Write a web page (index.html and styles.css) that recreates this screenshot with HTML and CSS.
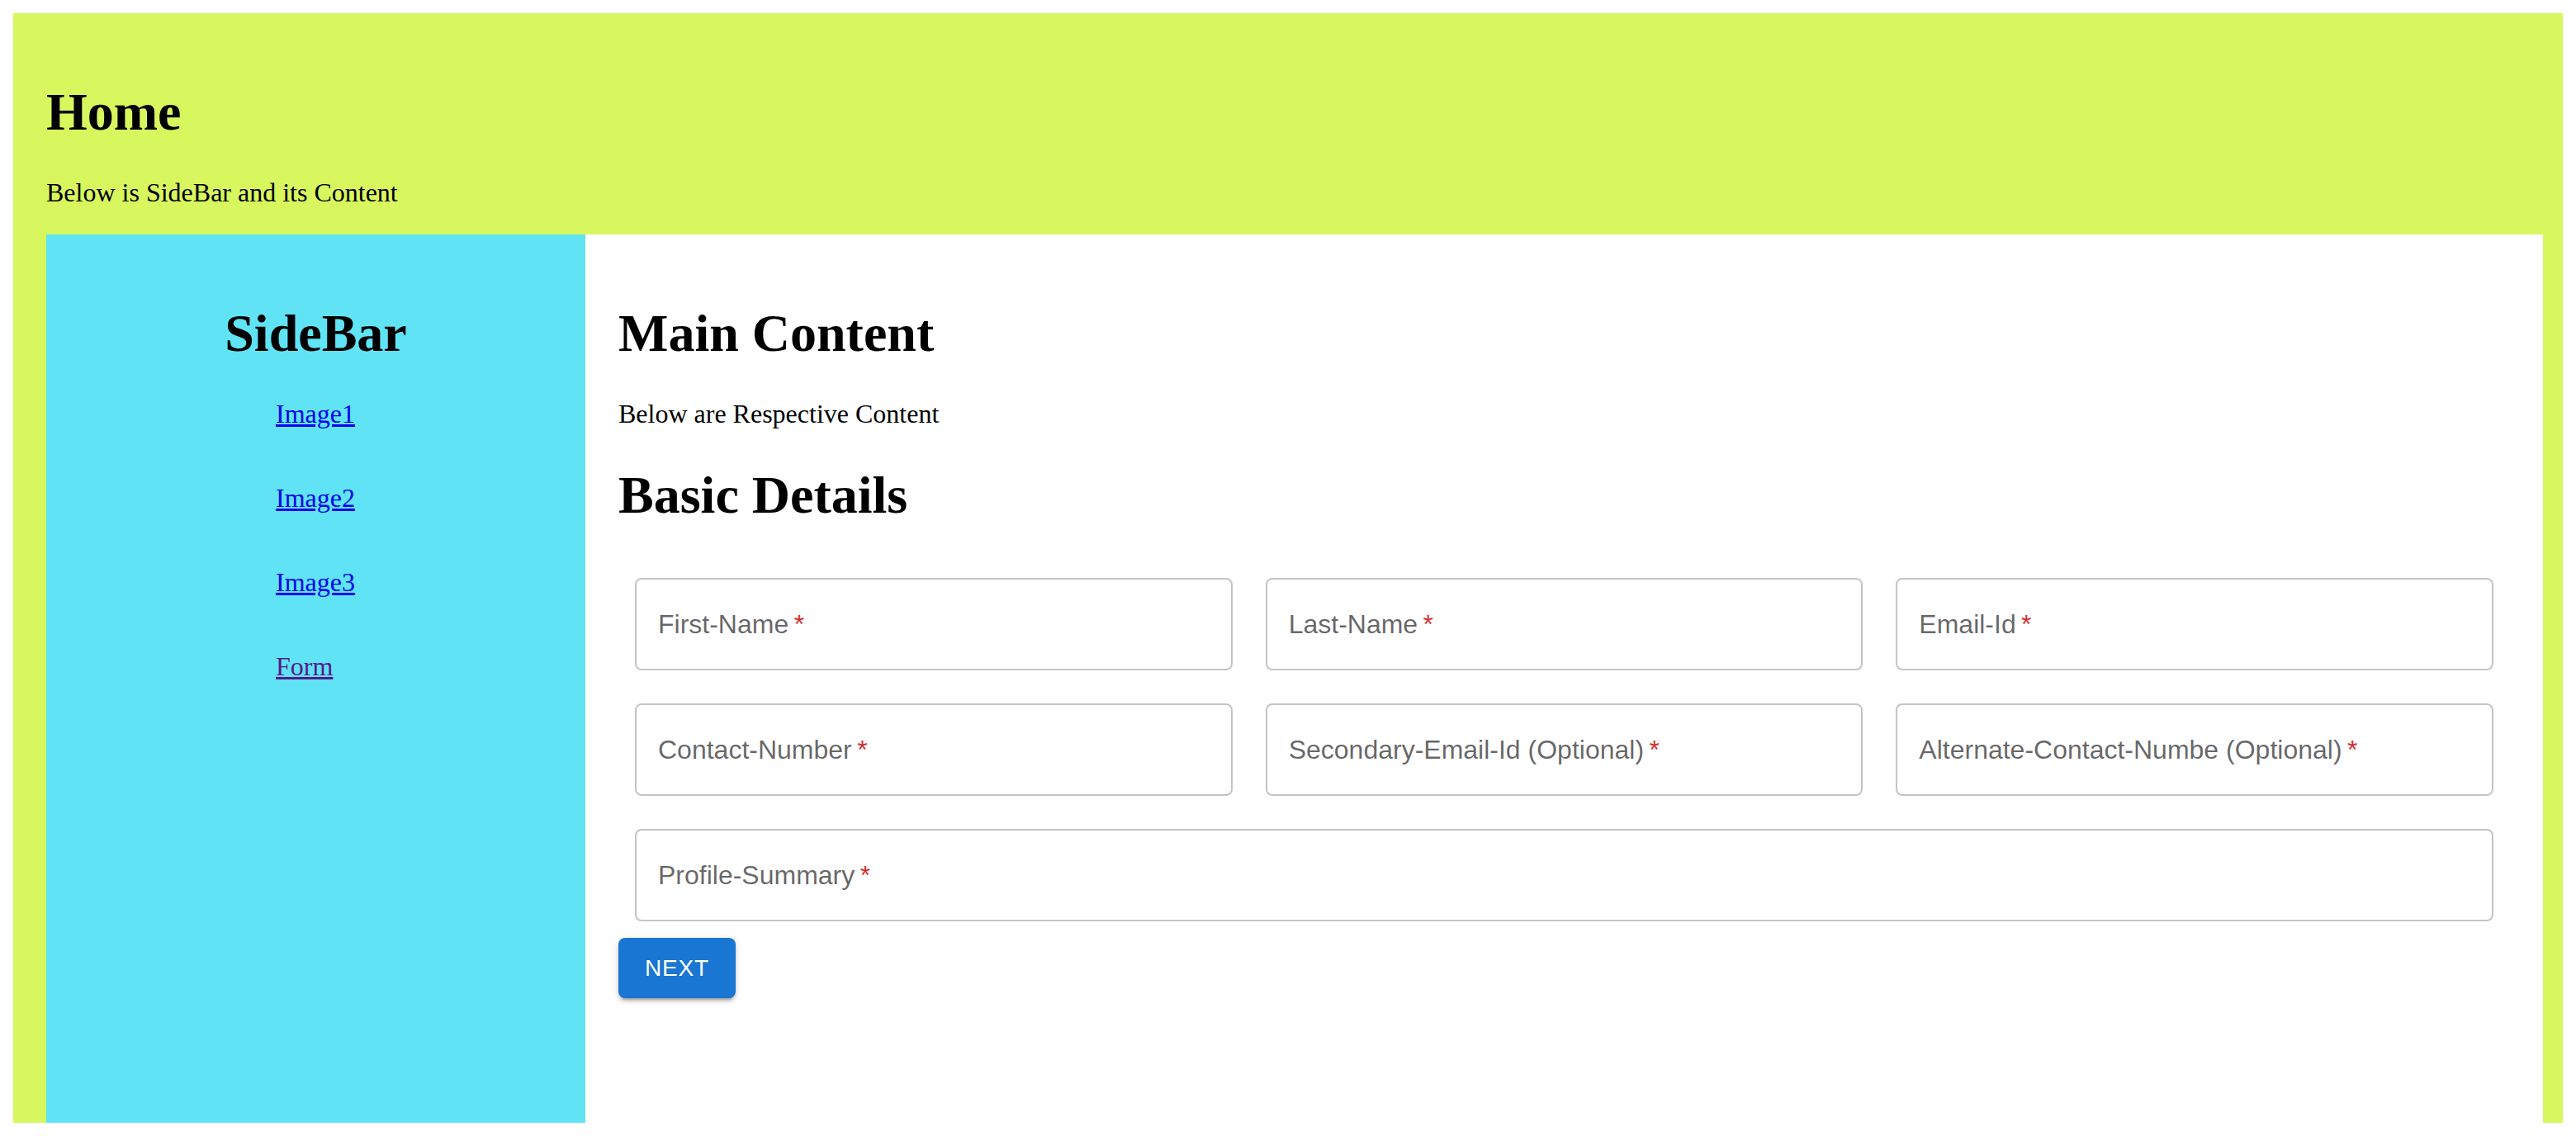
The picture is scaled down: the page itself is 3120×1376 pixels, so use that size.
FILE: index.html
```html
<!DOCTYPE html>
<html lang="en">
<head>
<meta charset="utf-8">
<title>Home</title>
<link rel="stylesheet" href="styles.css">
</head>
<body>
<div class="app">
  <h1 class="title">Home</h1>
  <p class="intro">Below is SideBar and its Content</p>
  <div class="layout">
    <aside class="sidebar">
      <h1 class="sidebar-title">SideBar</h1>
      <nav class="nav">
        <a href="#image1">Image1</a>
        <a href="#image2">Image2</a>
        <a href="#image3">Image3</a>
        <a href="#form" class="visited">Form</a>
      </nav>
    </aside>
    <main class="main">
      <h1 class="title">Main Content</h1>
      <p class="intro">Below are Respective Content</p>
      <h1 class="title">Basic Details</h1>
      <form class="form-grid">
        <div class="cell"><div class="field"><span class="label">First-Name<span class="req">&thinsp;*</span></span></div></div>
        <div class="cell"><div class="field"><span class="label">Last-Name<span class="req">&thinsp;*</span></span></div></div>
        <div class="cell"><div class="field"><span class="label">Email-Id<span class="req">&thinsp;*</span></span></div></div>
        <div class="cell"><div class="field"><span class="label">Contact-Number<span class="req">&thinsp;*</span></span></div></div>
        <div class="cell"><div class="field"><span class="label">Secondary-Email-Id (Optional)<span class="req">&thinsp;*</span></span></div></div>
        <div class="cell"><div class="field"><span class="label">Alternate-Contact-Numbe (Optional)<span class="req">&thinsp;*</span></span></div></div>
        <div class="cell cell-wide"><div class="field"><span class="label">Profile-Summary<span class="req">&thinsp;*</span></span></div></div>
      </form>
      <button type="button" class="btn">Next</button>
    </main>
  </div>
</div>
</body>
</html>
```

FILE: styles.css
```css
html {
  margin: 0;
  padding: 0;
  overflow: hidden;
}

body {
  margin: 16px;
  font-family: "Liberation Serif", "Times New Roman", serif;
  font-size: 32px;
  color: #000;
  background: #fff;
}

.app {
  background: #d8f65e;
  height: calc(100vh - 32px);
  box-sizing: border-box;
  padding: 40px 24px 0 40px;
  display: flex;
  flex-direction: column;
}

.title {
  font-family: "Liberation Serif", "Times New Roman", serif;
  font-size: 64px;
  font-weight: bold;
  line-height: 73.6px;
  margin: 42.88px 0;
}

.app > .title {
  margin-bottom: 0;
}

.intro {
  font-size: 32px;
  line-height: 36.8px;
  margin: 42.88px 0 32px;
}

.main > .intro {
  margin: 0;
}

.layout {
  display: flex;
  height: 1091px;
  flex-shrink: 0;
}

.sidebar {
  width: 653px;
  flex-shrink: 0;
  background: #5fe3f5;
  padding-top: 40px;
  box-sizing: border-box;
}

.sidebar-title {
  text-align: center;
  font-size: 64px;
  font-weight: bold;
  line-height: 73.6px;
  margin: 42.88px 0;
}

.nav {
  display: flex;
  flex-direction: column;
  align-items: flex-start;
  gap: 65px;
  padding-left: 278px;
}

.nav a {
  color: #0000ee;
  font-size: 32px;
  line-height: 36.8px;
  text-decoration: underline;
}

.nav a.visited {
  color: #551a8b;
}

.main {
  flex: 1;
  background: #fff;
  padding: 40px 40px 0 40px;
  box-sizing: border-box;
  min-width: 0;
}

.main > .title {
  margin: 42.88px 0;
}

.form-grid {
  display: grid;
  grid-template-columns: repeat(3, 1fr);
  margin: 0;
}

.cell {
  padding: 20px;
}

.cell-wide {
  grid-column: 1 / span 3;
}

.field {
  height: 112px;
  box-sizing: border-box;
  border: 2px solid rgba(0, 0, 0, 0.23);
  border-radius: 8px;
  display: flex;
  align-items: center;
  padding-left: 26px;
}

.label {
  font-family: "Liberation Sans", Arial, Helvetica, sans-serif;
  font-size: 32px;
  line-height: 46px;
  color: rgba(0, 0, 0, 0.6);
  white-space: nowrap;
}

.req {
  color: #d32f2f;
}

.btn {
  display: block;
  font-family: "Liberation Sans", Arial, Helvetica, sans-serif;
  font-size: 28px;
  font-weight: 500;
  line-height: 49px;
  letter-spacing: 0.8px;
  text-transform: uppercase;
  color: #fff;
  background: #1976d2;
  border: none;
  border-radius: 8px;
  padding: 12px 32px;
  min-width: 128px;
  box-shadow: 0 6px 2px -4px rgba(0, 0, 0, 0.2), 0 4px 4px 0 rgba(0, 0, 0, 0.14), 0 2px 10px 0 rgba(0, 0, 0, 0.12);
  cursor: pointer;
}
```
